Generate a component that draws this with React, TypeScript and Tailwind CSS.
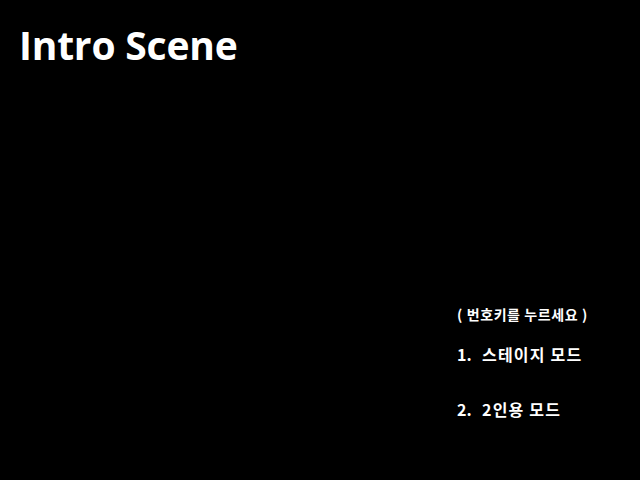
export default function App() {
  return (
    <div className="w-[640px] h-[480px] bg-black text-white flex flex-col" style={{ fontFamily: '"Open Sans", "Noto Sans CJK KR", sans-serif' }}>
      <h1 className="pl-[19px] pt-[19px] text-[39px] leading-[52px] font-bold tracking-[-0.2px]">Intro Scene</h1>
      <div className="ml-[457px] mt-[234px] flex flex-col font-bold" style={{ fontFamily: '"Noto Sans CJK KR", sans-serif' }}>
        <div className="text-[14px] leading-[18px] tracking-[0.6px]">( 번호키를 누르세요 )</div>
        <div className="mt-[20px] text-[16px] leading-[22px] tracking-[1.2px] flex"><span className="w-[25px] tracking-normal">1.</span><span>스테이지 모드</span></div>
        <div className="mt-[33px] text-[16px] leading-[22px] tracking-[1.2px] flex"><span className="w-[25px] tracking-normal">2.</span><span>2인용 모드</span></div>
      </div>
    </div>
  );
}
